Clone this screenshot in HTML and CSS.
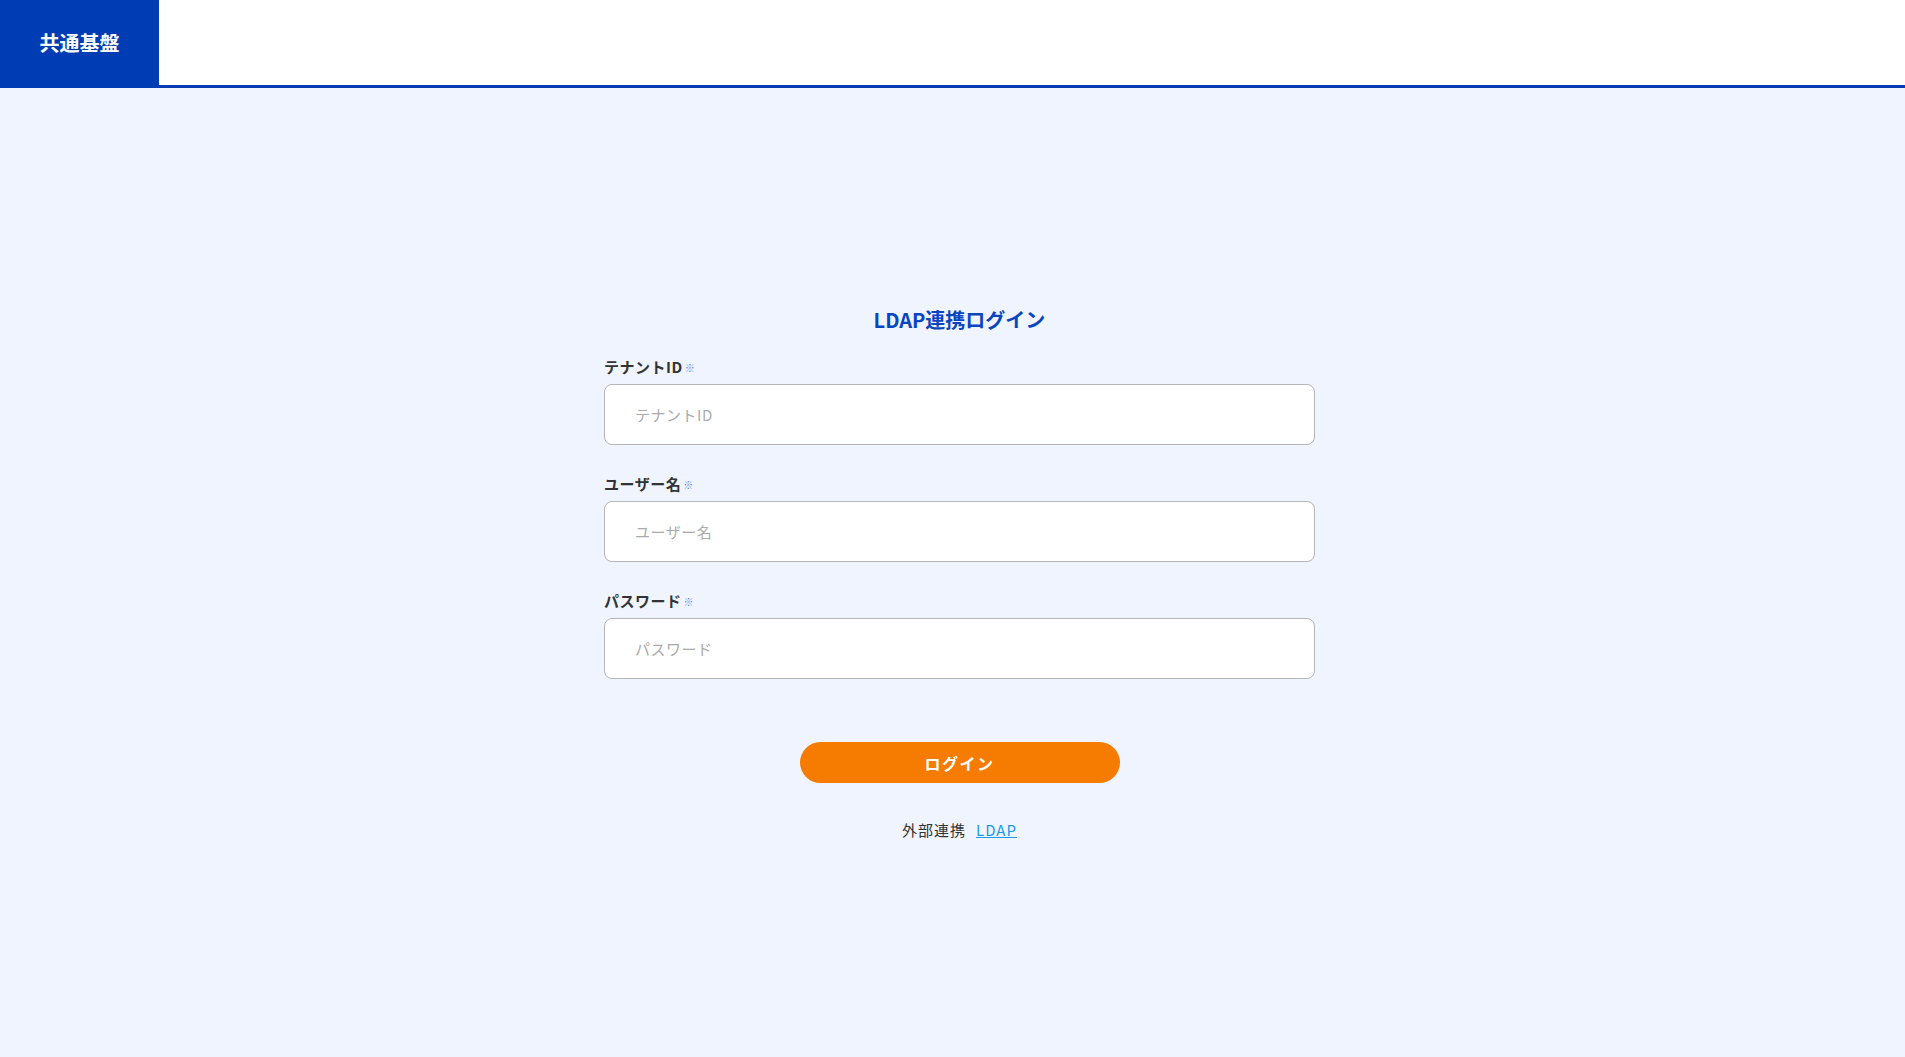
FILE: index.html
```html
<!DOCTYPE html>
<html lang="ja">
<head>
<meta charset="UTF-8">
<meta name="viewport" content="width=device-width, initial-scale=1.0">
<title>LDAP連携ログイン | 共通基盤</title>

<link rel="stylesheet" href="styles.css">

</head>

<body>

<header>
<div class="logo">共通基盤</div>
</header>

<!-- LOGIN -->
<main>

<form class="login" onsubmit="return false">

<h1>LDAP連携ログイン</h1>

<div class="field">
<label for="tenant">テナントID<span class="req">※</span></label>
<input id="tenant" placeholder="テナントID">
</div>

<div class="field">
<label for="user">ユーザー名<span class="req">※</span></label>
<input id="user" placeholder="ユーザー名">
</div>

<div class="field">
<label for="pass">パスワード<span class="req">※</span></label>
<input id="pass" type="password" placeholder="パスワード">
</div>

<button class="btn-login" type="submit">ログイン</button>

<p class="ext">外部連携<a href="#">LDAP</a></p>

</form>

</main>

</body>
</html>
```

FILE: styles.css
```css
body{
margin:0;
font-family:"Noto Sans CJK JP","Noto Sans",sans-serif;
background:#eff4fe;
color:#333;
}

/* HEADER */
header{
height:85px;
background:white;
border-bottom:3px solid #003db5;
display:flex;
}

.logo{
width:159px;
background:#003db5;
color:white;
font-size:20px;
font-weight:bold;
display:flex;
align-items:center;
justify-content:center;
}

/* FORM */
main{
display:flex;
justify-content:center;
padding:217px 0 0 14px;
}

.login{
width:711px;
display:flex;
flex-direction:column;
}

.login h1{
margin:0 0 21px;
font-size:20px;
line-height:30px;
text-align:center;
color:#0a45c0;
}

.field{
display:flex;
flex-direction:column;
margin-bottom:28px;
}

.field label{
font-size:15px;
line-height:22px;
font-weight:bold;
letter-spacing:0.5px;
color:#333;
margin-bottom:5px;
}

.req{
font-size:10px;
font-weight:normal;
color:#5b8de8;
margin-left:2px;
vertical-align:1px;
}

.field input{
box-sizing:border-box;
width:100%;
height:61px;
padding:0 30px;
border:1px solid #b5b5b8;
border-radius:8px;
background:white;
font-family:inherit;
font-size:15px;
letter-spacing:0.5px;
color:#333;
outline:none;
}

.field input::placeholder{
color:#aaa;
}

.btn-login{
align-self:center;
width:320px;
height:41px;
margin-top:35px;
border:none;
border-radius:21px;
background:#f57c00;
color:white;
font-family:inherit;
font-size:16px;
font-weight:bold;
letter-spacing:1.5px;
cursor:pointer;
}

.ext{
margin:36px 0 0;
text-align:center;
font-size:15px;
line-height:22px;
letter-spacing:1px;
color:#333;
}

.ext a{
margin-left:10px;
color:#1b9ae8;
}
```
